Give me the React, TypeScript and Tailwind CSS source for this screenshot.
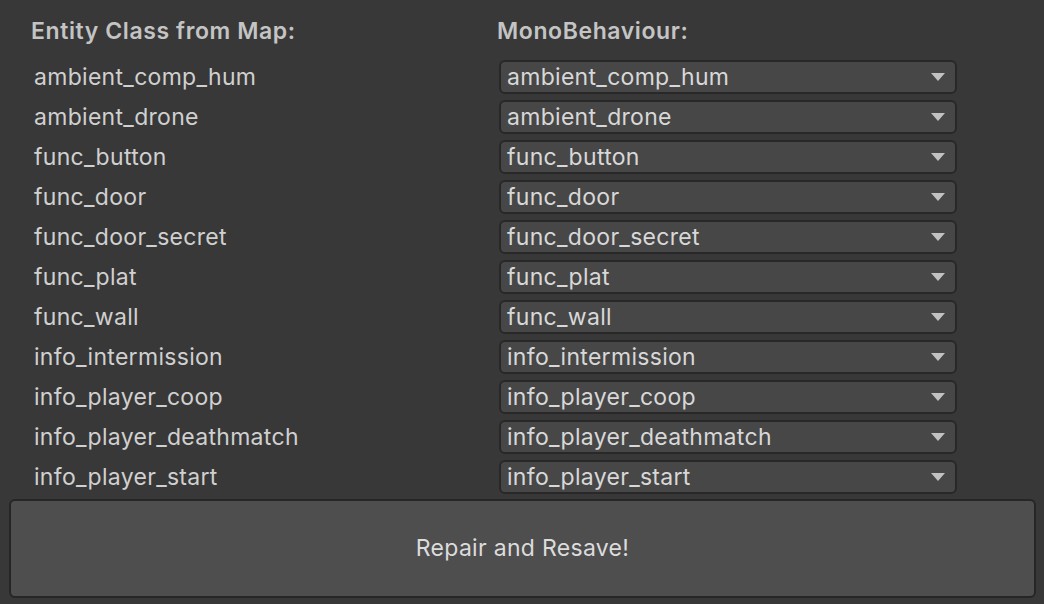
import React from "react";

const rows = [
  "ambient_comp_hum",
  "ambient_drone",
  "func_button",
  "func_door",
  "func_door_secret",
  "func_plat",
  "func_wall",
  "info_intermission",
  "info_player_coop",
  "info_player_deathmatch",
  "info_player_start",
];

export default function App() {
  return (
    <div
      className="w-[1044px] h-[604px] bg-[#383838] overflow-hidden flex flex-col pt-[11px]"
      style={{ fontFamily: "Inter, 'Noto Sans', sans-serif" }}
    >
      <div className="flex h-[40px] items-center text-[23px] font-semibold tracking-[0.6px] text-[#c4c4c4]">
        <div className="pl-[31px] w-[497px]">Entity Class from Map:</div>
        <div>MonoBehaviour:</div>
      </div>
      <div className="flex flex-col mt-[6px]">
        {rows.map((r) => (
          <div key={r} className="flex h-[40px] items-center">
            <div className="pl-[34px] w-[499px] text-[23px] tracking-[0.3px] text-[#d0d0d0]">{r}</div>
            <div className="w-[458px] h-[34px] rounded-[6px] bg-[#474747] border-2 border-[#282828] flex items-center justify-between pl-[6px] pr-[10px] text-[23px] tracking-[0.3px] text-[#d8d8d8]">
              <span>{r}</span>
              <svg width="14" height="9" viewBox="0 0 14 9">
                <polygon points="0,0 14,0 7,8" fill="#c2c2c2" />
              </svg>
            </div>
          </div>
        ))}
      </div>
      <div className="mt-[2px] ml-[9px] w-[1027px] h-[99px] rounded-[6px] bg-[#4e4e4e] border-2 border-[#262626] flex items-center justify-center text-[23px] tracking-[0.3px] text-[#dcdcdc]">
        Repair and Resave!
      </div>
    </div>
  );
}
